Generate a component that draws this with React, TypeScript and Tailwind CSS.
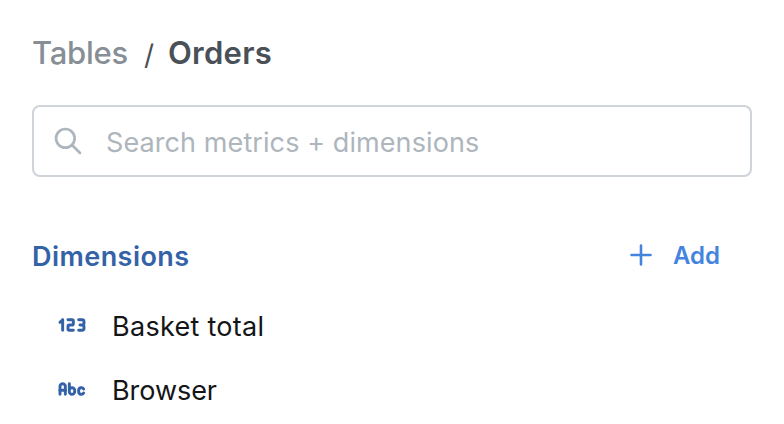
import React from 'react';

const NumberIcon = () => (
  <svg width="32" height="32" viewBox="0 0 24 24" fill="none" stroke="currentColor" strokeWidth="2.2" strokeLinecap="round" strokeLinejoin="round">
    <path d="M3 10l2 -2v8" />
    <path d="M9 8h3a1 1 0 0 1 1 1v2a1 1 0 0 1 -1 1h-2a1 1 0 0 0 -1 1v2a1 1 0 0 0 1 1h3" />
    <path d="M17 8h2.5a1.5 1.5 0 0 1 1.5 1.5v1a1.5 1.5 0 0 1 -1.5 1.5h-1.5h1.5a1.5 1.5 0 0 1 1.5 1.5v1a1.5 1.5 0 0 1 -1.5 1.5h-2.5" />
  </svg>
);

const TextIcon = () => (
  <svg width="32" height="32" viewBox="0 0 24 24" fill="none" stroke="currentColor" strokeWidth="2.2" strokeLinecap="round" strokeLinejoin="round">
    <path d="M3 16v-6a2 2 0 1 1 4 0v6" />
    <path d="M3 13h4" />
    <path d="M10 8v6a2 2 0 1 0 4 0v-1a2 2 0 1 0 -4 0v1" />
    <path d="M20.732 12a2 2 0 0 0 -3.732 1v1a2 2 0 0 0 3.726 1.01" />
  </svg>
);

const fields = [
  { name: 'Basket total', Icon: NumberIcon, tracking: 'tracking-[0.28px]' },
  { name: 'Browser', Icon: TextIcon, tracking: 'tracking-[-0.05px]' },
];

export default function App() {
  return (
    <main className="h-[424px] w-[784px] bg-white px-8 pt-8 font-['Inter',sans-serif]">
      <nav className="flex h-[42px] items-center text-[31px] leading-[42px]">
        <span className="w-[95px] whitespace-nowrap font-medium tracking-[-0.23px] text-[#868e96]">Tables</span>
        <span className="ml-[17px] w-[10px] pt-1 text-[28px] text-[#495057]">/</span>
        <span className="ml-[14px] font-semibold tracking-[0.25px] text-[#495057]">Orders</span>
      </nav>
      <label className="mt-[31px] flex h-[72px] w-[720px] items-center rounded-lg border-2 border-[#ced4da] pl-[18px]">
        <svg width="32" height="32" viewBox="0 0 24 24" fill="none" stroke="#adb5bd" strokeWidth="2" strokeLinecap="round">
          <circle cx="10" cy="10" r="7" />
          <path d="M21 21l-6 -6" />
        </svg>
        <span className="ml-[22px] whitespace-nowrap pt-1 text-[27px] leading-[42px] tracking-[0.09px] text-[#adb5bd]">Search metrics + dimensions</span>
      </label>
      <section>
        <header className="mt-[59px] flex h-10 items-center justify-between pr-8">
          <h2 className="pt-0.5 text-[27px] font-semibold leading-[42px] tracking-[0.45px] text-[#3462a7]">Dimensions</h2>
          <button className="flex items-center gap-5 text-[24px] font-semibold text-[#4484df]">
            <svg className="mb-0.5" width="24" height="24" viewBox="0 0 24 24" fill="none" stroke="currentColor" strokeWidth="2.6" strokeLinecap="round">
              <path d="M12 2.5v19M2.5 12h19" />
            </svg>
            Add
          </button>
        </header>
        <ul className="mt-[18px] pl-6 text-[27px] leading-[42px] text-[#141517]">
          {fields.map(({ name, Icon, tracking }) => (
            <li key={name} className="flex h-16 items-center gap-6">
              <span className="pb-0.5"><span className="block text-[#3462a7]"><Icon /></span></span>
              <span className={`pt-0.5 ${tracking}`}>{name}</span>
            </li>
          ))}
        </ul>
      </section>
    </main>
  );
}
